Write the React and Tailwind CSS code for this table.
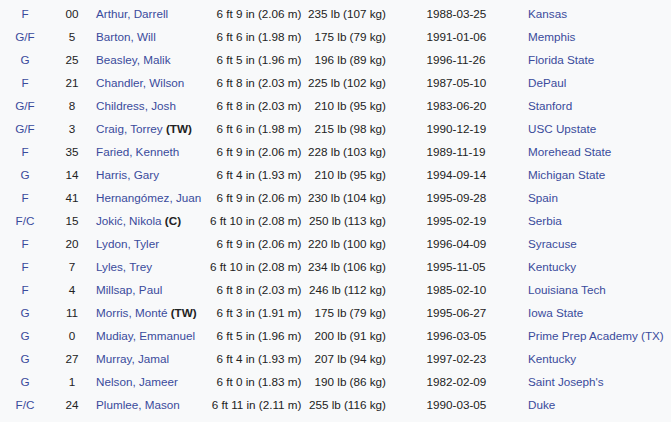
const players = [
  ['F', '00', 'Arthur, Darrell', '', '6 ft 9 in (2.06 m)', '235 lb (107 kg)', '1988-03-25', 'Kansas'],
  ['G/F', '5', 'Barton, Will', '', '6 ft 6 in (1.98 m)', '175 lb (79 kg)', '1991-01-06', 'Memphis'],
  ['G', '25', 'Beasley, Malik', '', '6 ft 5 in (1.96 m)', '196 lb (89 kg)', '1996-11-26', 'Florida State'],
  ['F', '21', 'Chandler, Wilson', '', '6 ft 8 in (2.03 m)', '225 lb (102 kg)', '1987-05-10', 'DePaul'],
  ['G/F', '8', 'Childress, Josh', '', '6 ft 8 in (2.03 m)', '210 lb (95 kg)', '1983-06-20', 'Stanford'],
  ['G/F', '3', 'Craig, Torrey', '(TW)', '6 ft 6 in (1.98 m)', '215 lb (98 kg)', '1990-12-19', 'USC Upstate'],
  ['F', '35', 'Faried, Kenneth', '', '6 ft 9 in (2.06 m)', '228 lb (103 kg)', '1989-11-19', 'Morehead State'],
  ['G', '14', 'Harris, Gary', '', '6 ft 4 in (1.93 m)', '210 lb (95 kg)', '1994-09-14', 'Michigan State'],
  ['F', '41', 'Hernangómez, Juan', '', '6 ft 9 in (2.06 m)', '230 lb (104 kg)', '1995-09-28', 'Spain'],
  ['F/C', '15', 'Jokić, Nikola', '(C)', '6 ft 10 in (2.08 m)', '250 lb (113 kg)', '1995-02-19', 'Serbia'],
  ['F', '20', 'Lydon, Tyler', '', '6 ft 9 in (2.06 m)', '220 lb (100 kg)', '1996-04-09', 'Syracuse'],
  ['F', '7', 'Lyles, Trey', '', '6 ft 10 in (2.08 m)', '234 lb (106 kg)', '1995-11-05', 'Kentucky'],
  ['F', '4', 'Millsap, Paul', '', '6 ft 8 in (2.03 m)', '246 lb (112 kg)', '1985-02-10', 'Louisiana Tech'],
  ['G', '11', 'Morris, Monté', '(TW)', '6 ft 3 in (1.91 m)', '175 lb (79 kg)', '1995-06-27', 'Iowa State'],
  ['G', '0', 'Mudiay, Emmanuel', '', '6 ft 5 in (1.96 m)', '200 lb (91 kg)', '1996-03-05', 'Prime Prep Academy (TX)'],
  ['G', '27', 'Murray, Jamal', '', '6 ft 4 in (1.93 m)', '207 lb (94 kg)', '1997-02-23', 'Kentucky'],
  ['G', '1', 'Nelson, Jameer', '', '6 ft 0 in (1.83 m)', '190 lb (86 kg)', '1982-02-09', "Saint Joseph's"],
  ['F/C', '24', 'Plumlee, Mason', '', '6 ft 11 in (2.11 m)', '255 lb (116 kg)', '1990-03-05', 'Duke'],
];

function App() {
  return (
    <div
      className="min-h-screen bg-[#f8f9fa] pt-[1.5px] text-[11.7px] leading-[23px] text-[#222222]"
      style={{ fontFamily: '"Liberation Sans", Arial, sans-serif' }}
    >
      {players.map(([pos, num, name, tag, height, weight, born, college]) => (
        <div key={name} className="flex h-[23px] whitespace-nowrap">
          <div className="w-[50px] shrink-0 text-center text-[#3a4b9c]">{pos}</div>
          <div className="w-[44px] shrink-0 text-center">{num}</div>
          <div className="w-[102px] shrink-0 pl-[2px]">
            <span className="text-[#3a4b9c]">{name}</span>
            {tag && <b className="font-bold"> {tag}</b>}
          </div>
          <div className="w-[105.5px] shrink-0 text-right">{height}</div>
          <div className="w-[84.5px] shrink-0 text-right">{weight}</div>
          <div className="w-[142px] shrink-0 pl-[40.5px]">{born}</div>
          <div className="flex-1 text-[#3a4b9c]">{college}</div>
        </div>
      ))}
    </div>
  );
}

export default App;
